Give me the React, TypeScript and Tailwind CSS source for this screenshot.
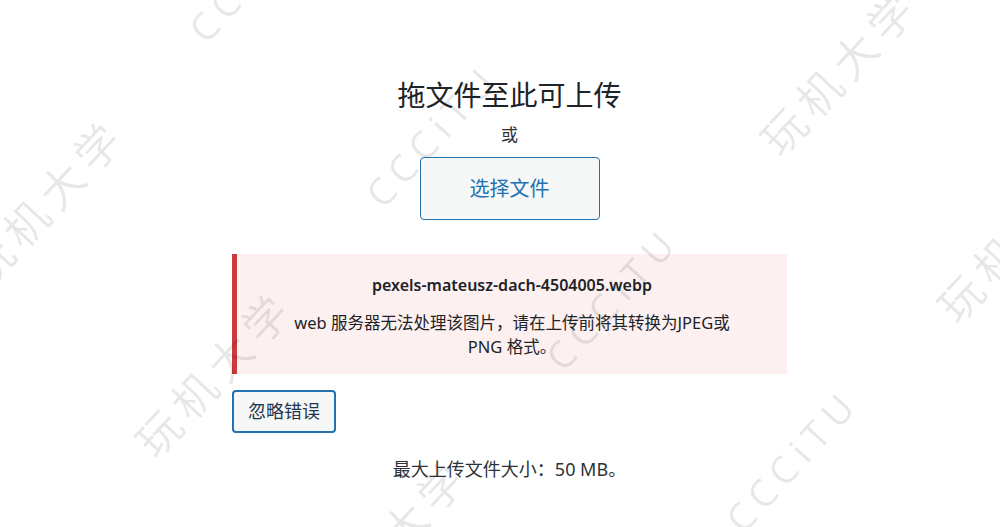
import React from "react";

const marks: { text: string; cls: string }[] = [
  { text: "CCCiTU", cls: "left-[255px] top-[-30px]" },
  { text: "CCCiTU", cls: "left-[432px] top-[135px]" },
  { text: "CCCiTU", cls: "left-[612px] top-[298px]" },
  { text: "CCCiTU", cls: "left-[792px] top-[460px]" },
];
const marksCn: { text: string; cls: string }[] = [
  { text: "玩机大学", cls: "left-[45px] top-[200px]" },
  { text: "玩机大学", cls: "left-[213px] top-[372px]" },
  { text: "玩机大学", cls: "left-[388px] top-[540px]" },
  { text: "玩机大学", cls: "left-[838px] top-[70px]" },
  { text: "玩机大学", cls: "left-[1015px] top-[237px]" },
];

export default function App() {
  return (
    <div className="relative w-[1000px] h-[527px] overflow-hidden bg-white font-['Noto_Sans','Noto_Sans_CJK_SC',sans-serif] text-[#1d2327]">
      <div className="ml-[232px] w-[555px] flex flex-col items-center pt-[77px]">
        <h1 className="text-[28px] leading-[36px] font-normal text-[#1d2327]">拖文件至此可上传</h1>
        <p className="mt-[10px] text-[17px] leading-[24px] text-[#2c3338]">或</p>
        <button className="mt-[10px] w-[180px] h-[63px] rounded-[4px] border border-[#2271b1] bg-[#f6f7f7] text-[20px] text-[#2271b1]">
          选择文件
        </button>
        <div className="mt-[34px] w-[555px] h-[120px] border-l-[5px] border-[#cc3b3b] bg-[#fcf0f1] flex flex-col items-center pt-[19px]">
          <p className="text-[16px] leading-[24px] font-semibold text-[#1d2327]">pexels-mateusz-dach-4504005.webp</p>
          <p className="mt-[14px] text-[16.5px] leading-[24px] text-center text-[#1d2327]">
            web 服务器无法处理该图片，请在上传前将其转换为JPEG或
            <br />
            PNG 格式。
          </p>
        </div>
        <button className="mt-[16px] self-start w-[104px] h-[43px] rounded-[4px] border-2 border-[#2271b1] bg-[#f6f7f7] text-[18px] text-[#1f3550]">
          忽略错误
        </button>
        <p className="mt-[24px] text-[18px] leading-[24px] text-[#2c3338]">最大上传文件大小：50 MB。</p>
      </div>
      <div className="pointer-events-none absolute inset-0">
        {marks.map((m, i) => (
          <span
            key={"a" + i}
            className={"absolute -translate-x-1/2 -translate-y-1/2 -rotate-[48deg] whitespace-nowrap text-[38px] tracking-[8px] text-black/[0.09] font-['Noto_Sans',sans-serif] " + m.cls}
          >
            {m.text}
          </span>
        ))}
        {marksCn.map((m, i) => (
          <span
            key={"b" + i}
            className={"absolute -translate-x-1/2 -translate-y-1/2 -rotate-[47deg] whitespace-nowrap text-[44px] tracking-[8px] text-black/[0.09] font-['Noto_Sans_CJK_SC',sans-serif] " + m.cls}
          >
            {m.text}
          </span>
        ))}
      </div>
    </div>
  );
}
